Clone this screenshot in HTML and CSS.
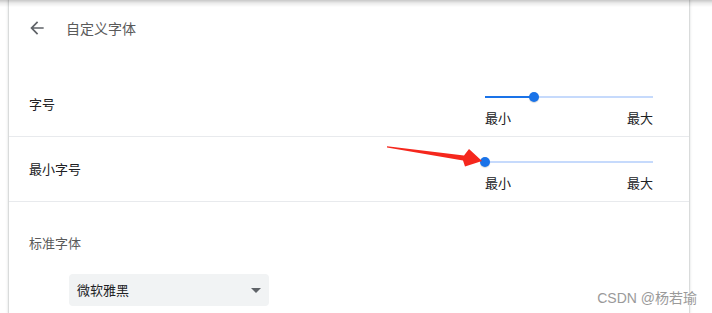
FILE: index.html
```html
<!DOCTYPE html>
<html lang="zh-CN">
<head>
<meta charset="utf-8">
<title>自定义字体</title>
<link rel="stylesheet" href="styles.css">
</head>
<body>
<div class="topshadow"></div>
<div class="card">
  <div class="header">
    <svg class="back" viewBox="0 0 24 24" width="20" height="20"><path d="M20 11H7.83l5.59-5.59L12 4l-8 8 8 8 1.41-1.41L7.83 13H20v-2z" fill="#5f6368"/></svg>
    <span class="title">自定义字体</span>
  </div>
  <div class="row">
    <span class="label">字号</span>
    <div class="slider">
      <div class="track">
        <div class="active" style="width:29.2%"></div>
        <div class="thumb" style="left:29.2%"></div>
      </div>
      <div class="ticks"><span>最小</span><span>最大</span></div>
    </div>
  </div>
  <div class="row">
    <span class="label">最小字号</span>
    <div class="slider">
      <div class="track">
        <div class="active" style="width:0%"></div>
        <div class="thumb" style="left:0%"></div>
      </div>
      <div class="ticks"><span>最小</span><span>最大</span></div>
    </div>
  </div>
  <div class="section">
    <div class="section-title">标准字体</div>
    <div class="select"><span>微软雅黑</span><span class="caret"></span></div>
  </div>
</div>
<svg class="annot" width="712" height="313" viewBox="0 0 712 313">
  <polygon points="387,146.3 464,155.5 469,149 482,161 465,166.5 463,160.5 387,147.6" fill="#f5271d"/>
</svg>
<div class="watermark">CSDN @杨若瑜</div>
</body>
</html>
```

FILE: styles.css
```css
html, body {
  margin: 0;
  padding: 0;
  background: #ffffff;
  height: 100%;
  overflow: hidden;
}
body {
  font-family: "Noto Sans CJK SC", "Microsoft YaHei", sans-serif;
  font-size: 13px;
  line-height: 16px;
  color: #202124;
}
.topshadow {
  position: fixed;
  left: 0;
  top: 0;
  width: 100%;
  height: 7px;
  background: linear-gradient(rgba(0,0,0,0.22), rgba(0,0,0,0.08) 45%, rgba(0,0,0,0));
  z-index: 5;
}
.card {
  margin-left: 9px;
  width: 680px;
  min-height: 100vh;
  background: #fff;
  box-shadow: 0 0 1px 1px rgba(60,64,67,0.12), 0 0 3px 1px rgba(60,64,67,0.12);
}
.header {
  height: 56px;
  display: flex;
  align-items: center;
  padding-left: 18px;
  margin-bottom: 16px;
}
.back {
  display: block;
  flex: none;
}
.title {
  margin-left: 19px;
  font-size: 14px;
  color: #5a5a5a;
}
.row {
  box-sizing: border-box;
  height: 65px;
  border-bottom: 1px solid #e8eaed;
  display: flex;
  align-items: center;
  padding-left: 20px;
}
.label {
  margin-top: -1px;
}
.slider {
  align-self: flex-start;
  margin-left: auto;
  margin-right: 36px;
  width: 168px;
  padding-top: 20px;
}
.track {
  position: relative;
  height: 10px;
}
.track::before {
  content: "";
  position: absolute;
  left: 0;
  right: 0;
  top: 4px;
  height: 2px;
  background: #c6dafc;
}
.active {
  position: absolute;
  left: 0;
  top: 4px;
  height: 2px;
  background: #1a73e8;
}
.thumb {
  position: absolute;
  top: 0;
  width: 10px;
  height: 10px;
  margin-left: -5px;
  border-radius: 50%;
  background: #1a73e8;
  box-shadow: 0 1px 1px rgba(0,0,0,0.15);
}
.ticks {
  display: flex;
  justify-content: space-between;
  margin-top: 8px;
}
.section {
  padding-left: 20px;
  padding-top: 33px;
}
.section-title {
  color: #5a5a5a;
}
.select {
  margin-top: 23px;
  margin-left: 40px;
  width: 200px;
  height: 32px;
  box-sizing: border-box;
  border-radius: 4px;
  background: #f1f3f4;
  display: flex;
  align-items: center;
  justify-content: space-between;
  padding: 0 8px 0 8px;
}
.caret {
  width: 0;
  height: 0;
  border-left: 5px solid transparent;
  border-right: 5px solid transparent;
  border-top: 5px solid #5f6368;
}
.annot {
  position: absolute;
  left: 0;
  top: 0;
  pointer-events: none;
}
.watermark {
  position: absolute;
  right: 15px;
  top: 289px;
  font-family: "Liberation Sans", "Noto Sans CJK SC", sans-serif;
  font-size: 14px;
  line-height: 18px;
  color: #9a9a9a;
  text-shadow: 0 0 1px #fff;
}
```
